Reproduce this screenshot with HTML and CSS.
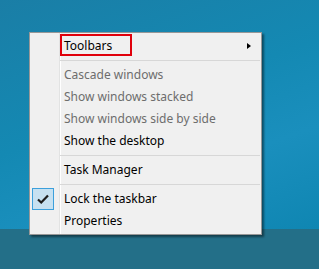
FILE: index.html
```html
<!DOCTYPE html>
<html lang="en">
<head>
    <meta charset="UTF-8">
    <title>Taskbar context menu</title>
    <link rel="stylesheet" href="styles.css">
</head>
<body>
    <div class="desktop"></div>
    <div class="taskbar"></div>

    <!-- right-click menu of the taskbar -->
    <div class="menu">
        <div class="item">
            <span class="label">Toolbars</span>
            <span class="arrow"></span>
        </div>
        <div class="sep"></div>
        <div class="item disabled"><span class="label">Cascade windows</span></div>
        <div class="item disabled"><span class="label">Show windows stacked</span></div>
        <div class="item disabled"><span class="label">Show windows side by side</span></div>
        <div class="item"><span class="label">Show the desktop</span></div>
        <div class="sep"></div>
        <div class="item"><span class="label">Task Manager</span></div>
        <div class="sep"></div>
        <div class="item checked">
            <span class="check">
                <svg width="12" height="10" viewBox="0 0 12 10">
                    <path d="M1 5.5 L4.2 8.5 L11 1.5" fill="none" stroke="#1e1e1e" stroke-width="2.2"/>
                </svg>
            </span>
            <span class="label">Lock the taskbar</span>
        </div>
        <div class="item"><span class="label">Properties</span></div>

        <div class="highlight"></div>
    </div>
</body>
</html>
```

FILE: styles.css
```css
body {
    margin: 0;
    width: 319px;
    height: 269px;
    overflow: hidden;
    font-family: 'Noto Sans', 'Open Sans', sans-serif;
    font-size: 12px;
    position: relative;
}
.desktop {
    height: 229px;
    background: linear-gradient(160deg, #1a7ea6 0%, #1489b3 45%, #1a8fbd 70%, #0f86b2 100%);
}
.taskbar {
    height: 40px;
    background: #236f88;
}
.menu {
    position: absolute;
    left: 29px;
    top: 32px;
    width: 231px;
    padding: 2px 0 2px 0;
    background: #f0f0f0;
    border: 1px solid #979797;
    box-shadow: 2px 2px 2px rgba(0, 0, 0, 0.45);
    background-image: linear-gradient(to right, transparent 29px, #e2e3e3 29px, #e2e3e3 30px, #ffffff 30px, #ffffff 31px, transparent 31px);
}
.item {
    height: 22px;
    display: flex;
    align-items: center;
    padding-left: 34px;
    color: #000;
    position: relative;
}
.item .label {
    line-height: 22px;
}
.item.disabled {
    color: #6d6d6d;
}
.sep {
    height: 1px;
    margin: 3px 1px 3px 30px;
    background: #d7d7d7;
}
.arrow {
    margin-left: auto;
    margin-right: 10px;
    width: 0;
    height: 0;
    border-top: 3.5px solid transparent;
    border-bottom: 3.5px solid transparent;
    border-left: 4px solid #000;
}
.check {
    position: absolute;
    left: 2px;
    top: 0;
    width: 20px;
    height: 20px;
    border: 1px solid #3ca0dc;
    background: #c7e1f1;
    display: flex;
    align-items: center;
    justify-content: center;
}
.highlight {
    position: absolute;
    left: 30px;
    top: 1px;
    width: 68px;
    height: 18px;
    border: 2px solid #e0000b;
}
```
